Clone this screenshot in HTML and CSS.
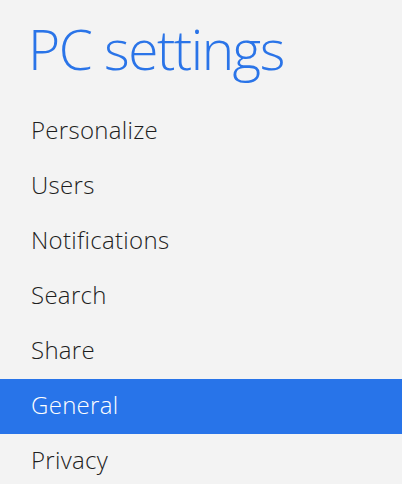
FILE: index.html
```html
<!DOCTYPE html>
<html>
<head>
<meta charset="utf-8">
<link rel="stylesheet" href="styles.css">
</head>
<body>
<div class="page">
  <h1 class="title">PC settings</h1>
  <ul class="menu">
    <li class="item">Personalize</li>
    <li class="item">Users</li>
    <li class="item">Notifications</li>
    <li class="item">Search</li>
    <li class="item">Share</li>
    <li class="item selected">General</li>
    <li class="item">Privacy</li>
  </ul>
</div>
</body>
</html>
```
FILE: styles.css
```css
html, body {
  margin: 0;
  padding: 0;
  background: #f3f3f3;
}
.page {
  width: 402px;
  height: 484px;
  overflow: hidden;
  font-family: "Open Sans", "Noto Sans", sans-serif;
}
.title {
  margin: 0;
  padding: 13px 0 0 28px;
  height: 90px;
  box-sizing: border-box;
  font-size: 55px;
  font-weight: 300;
  line-height: 72px;
  color: #2a74e8;
  letter-spacing: -1.5px;
}
.menu {
  list-style: none;
  margin: 14px 0 0;
  padding: 0;
}
.item {
  height: 55px;
  line-height: 52px;
  padding-left: 31px;
  font-size: 24px;
  font-weight: 350;
  letter-spacing: 0.3px;
  color: #1e1e1e;
}
.selected {
  background: #2874e9;
  color: #ffffff;
}
```
